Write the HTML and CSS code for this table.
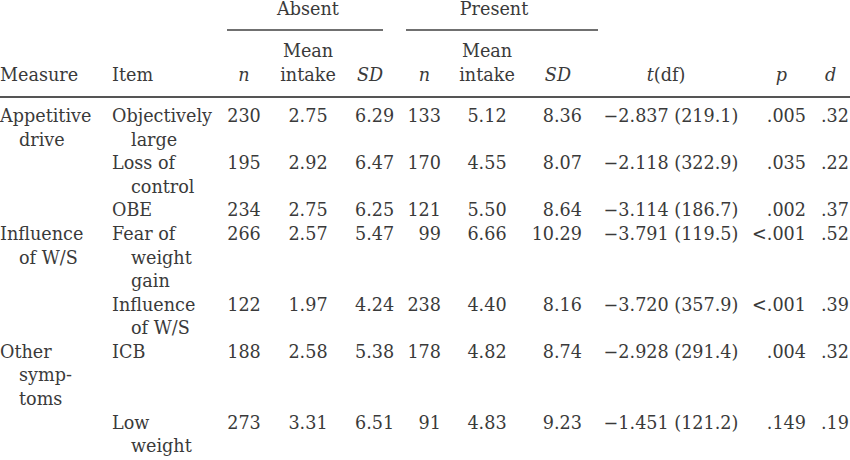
FILE: index.html
```html
<!DOCTYPE html>
<html lang="en">
<head>
  <meta charset="UTF-8">
  <title>Intake by symptom</title>
  <link rel="stylesheet" href="styles.css">
</head>
<body>

  <table class="results">
    <colgroup>
      <col class="w-measure">
      <col class="w-item">
      <col class="w-an">
      <col class="w-amean">
      <col class="w-asd">
      <col class="w-pn">
      <col class="w-pmean">
      <col class="w-psd">
      <col class="w-t">
      <col class="w-p">
      <col class="w-d">
    </colgroup>
    <thead>
      <tr class="group">
        <th colspan="2"></th>
        <th colspan="3"><div class="span-line absent">Absent</div></th>
        <th colspan="3"><div class="span-line present">Present</div></th>
        <th colspan="3"></th>
      </tr>
      <tr class="heads">
        <th class="left">Measure</th>
        <th class="left">Item</th>
        <th class="c-an"><i>n</i></th>
        <th class="c-mean">Mean<br>intake</th>
        <th class="c-asd h-asd"><i>SD</i></th>
        <th class="c-pn h-pn"><i>n</i></th>
        <th class="c-mean">Mean<br>intake</th>
        <th class="c-psd h-psd"><i>SD</i></th>
        <th class="c-t h-t"><i>t</i>(df)</th>
        <th class="c-p h-p"><i>p</i></th>
        <th class="h-d"><i>d</i></th>
      </tr>
    </thead>
    <tbody>
      <tr>
        <td class="hang" rowspan="3">Appetitive<br>drive</td>
        <td class="hang">Objectively<br>large</td>
        <td class="c-an">230</td>
        <td class="c-mean">2.75</td>
        <td class="c-asd">6.29</td>
        <td class="c-pn">133</td>
        <td class="c-mean">5.12</td>
        <td class="c-psd">8.36</td>
        <td class="c-t">&minus;2.837 (219.1)</td>
        <td class="c-p">.005</td>
        <td class="c-d">.32</td>
      </tr>
      <tr>
        <td class="hang">Loss of<br>control</td>
        <td class="c-an">195</td>
        <td class="c-mean">2.92</td>
        <td class="c-asd">6.47</td>
        <td class="c-pn">170</td>
        <td class="c-mean">4.55</td>
        <td class="c-psd">8.07</td>
        <td class="c-t">&minus;2.118 (322.9)</td>
        <td class="c-p">.035</td>
        <td class="c-d">.22</td>
      </tr>
      <tr>
        <td class="hang">OBE</td>
        <td class="c-an">234</td>
        <td class="c-mean">2.75</td>
        <td class="c-asd">6.25</td>
        <td class="c-pn">121</td>
        <td class="c-mean">5.50</td>
        <td class="c-psd">8.64</td>
        <td class="c-t">&minus;3.114 (186.7)</td>
        <td class="c-p">.002</td>
        <td class="c-d">.37</td>
      </tr>
      <tr>
        <td class="hang" rowspan="2">Influence<br>of W/S</td>
        <td class="hang">Fear of<br>weight<br>gain</td>
        <td class="c-an">266</td>
        <td class="c-mean">2.57</td>
        <td class="c-asd">5.47</td>
        <td class="c-pn">99</td>
        <td class="c-mean">6.66</td>
        <td class="c-psd">10.29</td>
        <td class="c-t">&minus;3.791 (119.5)</td>
        <td class="c-p">&lt;.001</td>
        <td class="c-d">.52</td>
      </tr>
      <tr>
        <td class="hang">Influence<br>of W/S</td>
        <td class="c-an">122</td>
        <td class="c-mean">1.97</td>
        <td class="c-asd">4.24</td>
        <td class="c-pn">238</td>
        <td class="c-mean">4.40</td>
        <td class="c-psd">8.16</td>
        <td class="c-t">&minus;3.720 (357.9)</td>
        <td class="c-p">&lt;.001</td>
        <td class="c-d">.39</td>
      </tr>
      <tr>
        <td class="hang">Other<br>symp-<br>toms</td>
        <td class="hang">ICB</td>
        <td class="c-an">188</td>
        <td class="c-mean">2.58</td>
        <td class="c-asd">5.38</td>
        <td class="c-pn">178</td>
        <td class="c-mean">4.82</td>
        <td class="c-psd">8.74</td>
        <td class="c-t">&minus;2.928 (291.4)</td>
        <td class="c-p">.004</td>
        <td class="c-d">.32</td>
      </tr>
      <tr>
        <td></td>
        <td class="hang">Low<br>weight</td>
        <td class="c-an">273</td>
        <td class="c-mean">3.31</td>
        <td class="c-asd">6.51</td>
        <td class="c-pn">91</td>
        <td class="c-mean">4.83</td>
        <td class="c-psd">9.23</td>
        <td class="c-t">&minus;1.451 (121.2)</td>
        <td class="c-p">.149</td>
        <td class="c-d">.19</td>
      </tr>
    </tbody>
  </table>

</body>
</html>
```

FILE: styles.css
```css
html, body {
  margin: 0;
  overflow: hidden;
  background: #ffffff;
}

body {
  font-family: "DejaVu Serif", "Liberation Serif", serif;
  font-size: 17.6px;
  line-height: 23.57px;
  color: #3a3a3a;
}

.results {
  table-layout: fixed;
  width: 850px;
  border-collapse: collapse;
  border-spacing: 0;
}

.results th,
.results td {
  padding: 0;
  font-weight: normal;
  vertical-align: top;
  white-space: nowrap;
}

.results i { font-style: italic; }

/* column widths */
.w-measure { width: 112px; }
.w-item { width: 115px; }
.w-an { width: 34px; }
.w-amean { width: 94px; }
.w-asd { width: 35px; }
.w-pn { width: 55px; }
.w-pmean { width: 84px; }
.w-psd { width: 69px; }
.w-t { width: 146px; }
.w-p { width: 66px; }
.w-d { width: 40px; }

/* group header with rule under it */
.group th { line-height: 18px; }

.span-line {
  text-align: center;
  padding-bottom: 10.6px;
  border-bottom: 2px solid #707070;
}
.absent { margin-right: 7px; padding-left: 6px; }
.present { margin-left: 16px; padding-right: 16px; }

.heads th {
  vertical-align: bottom;
  padding-top: 9.5px;
  padding-bottom: 9px;
  border-bottom: 2px solid #555555;
}

.left { text-align: left; }

.hang {
  text-align: left;
  padding-left: 19px !important;
  text-indent: -19px;
}

tbody tr:first-child td { padding-top: 7px; }

/* column alignment */
.c-an { text-align: center; }
.c-mean { text-align: center; }
.c-asd { text-align: center; }
.c-pn { text-align: right; padding-right: 4px !important; }
.c-psd { text-align: right; padding-right: 16px !important; }
.c-t { text-align: center; }
.c-p { text-align: right; padding-right: 4px !important; }
.c-d { text-align: right; padding-right: 1px !important; }

/* header tweaks */
.h-asd { padding-right: 5px !important; }
.h-pn { padding-right: 15px !important; }
.h-psd { padding-right: 27px !important; }
.h-t { padding-right: 10px !important; }
.h-p { padding-right: 23px !important; }
.h-d { text-align: left; padding-left: 15px !important; }
```
